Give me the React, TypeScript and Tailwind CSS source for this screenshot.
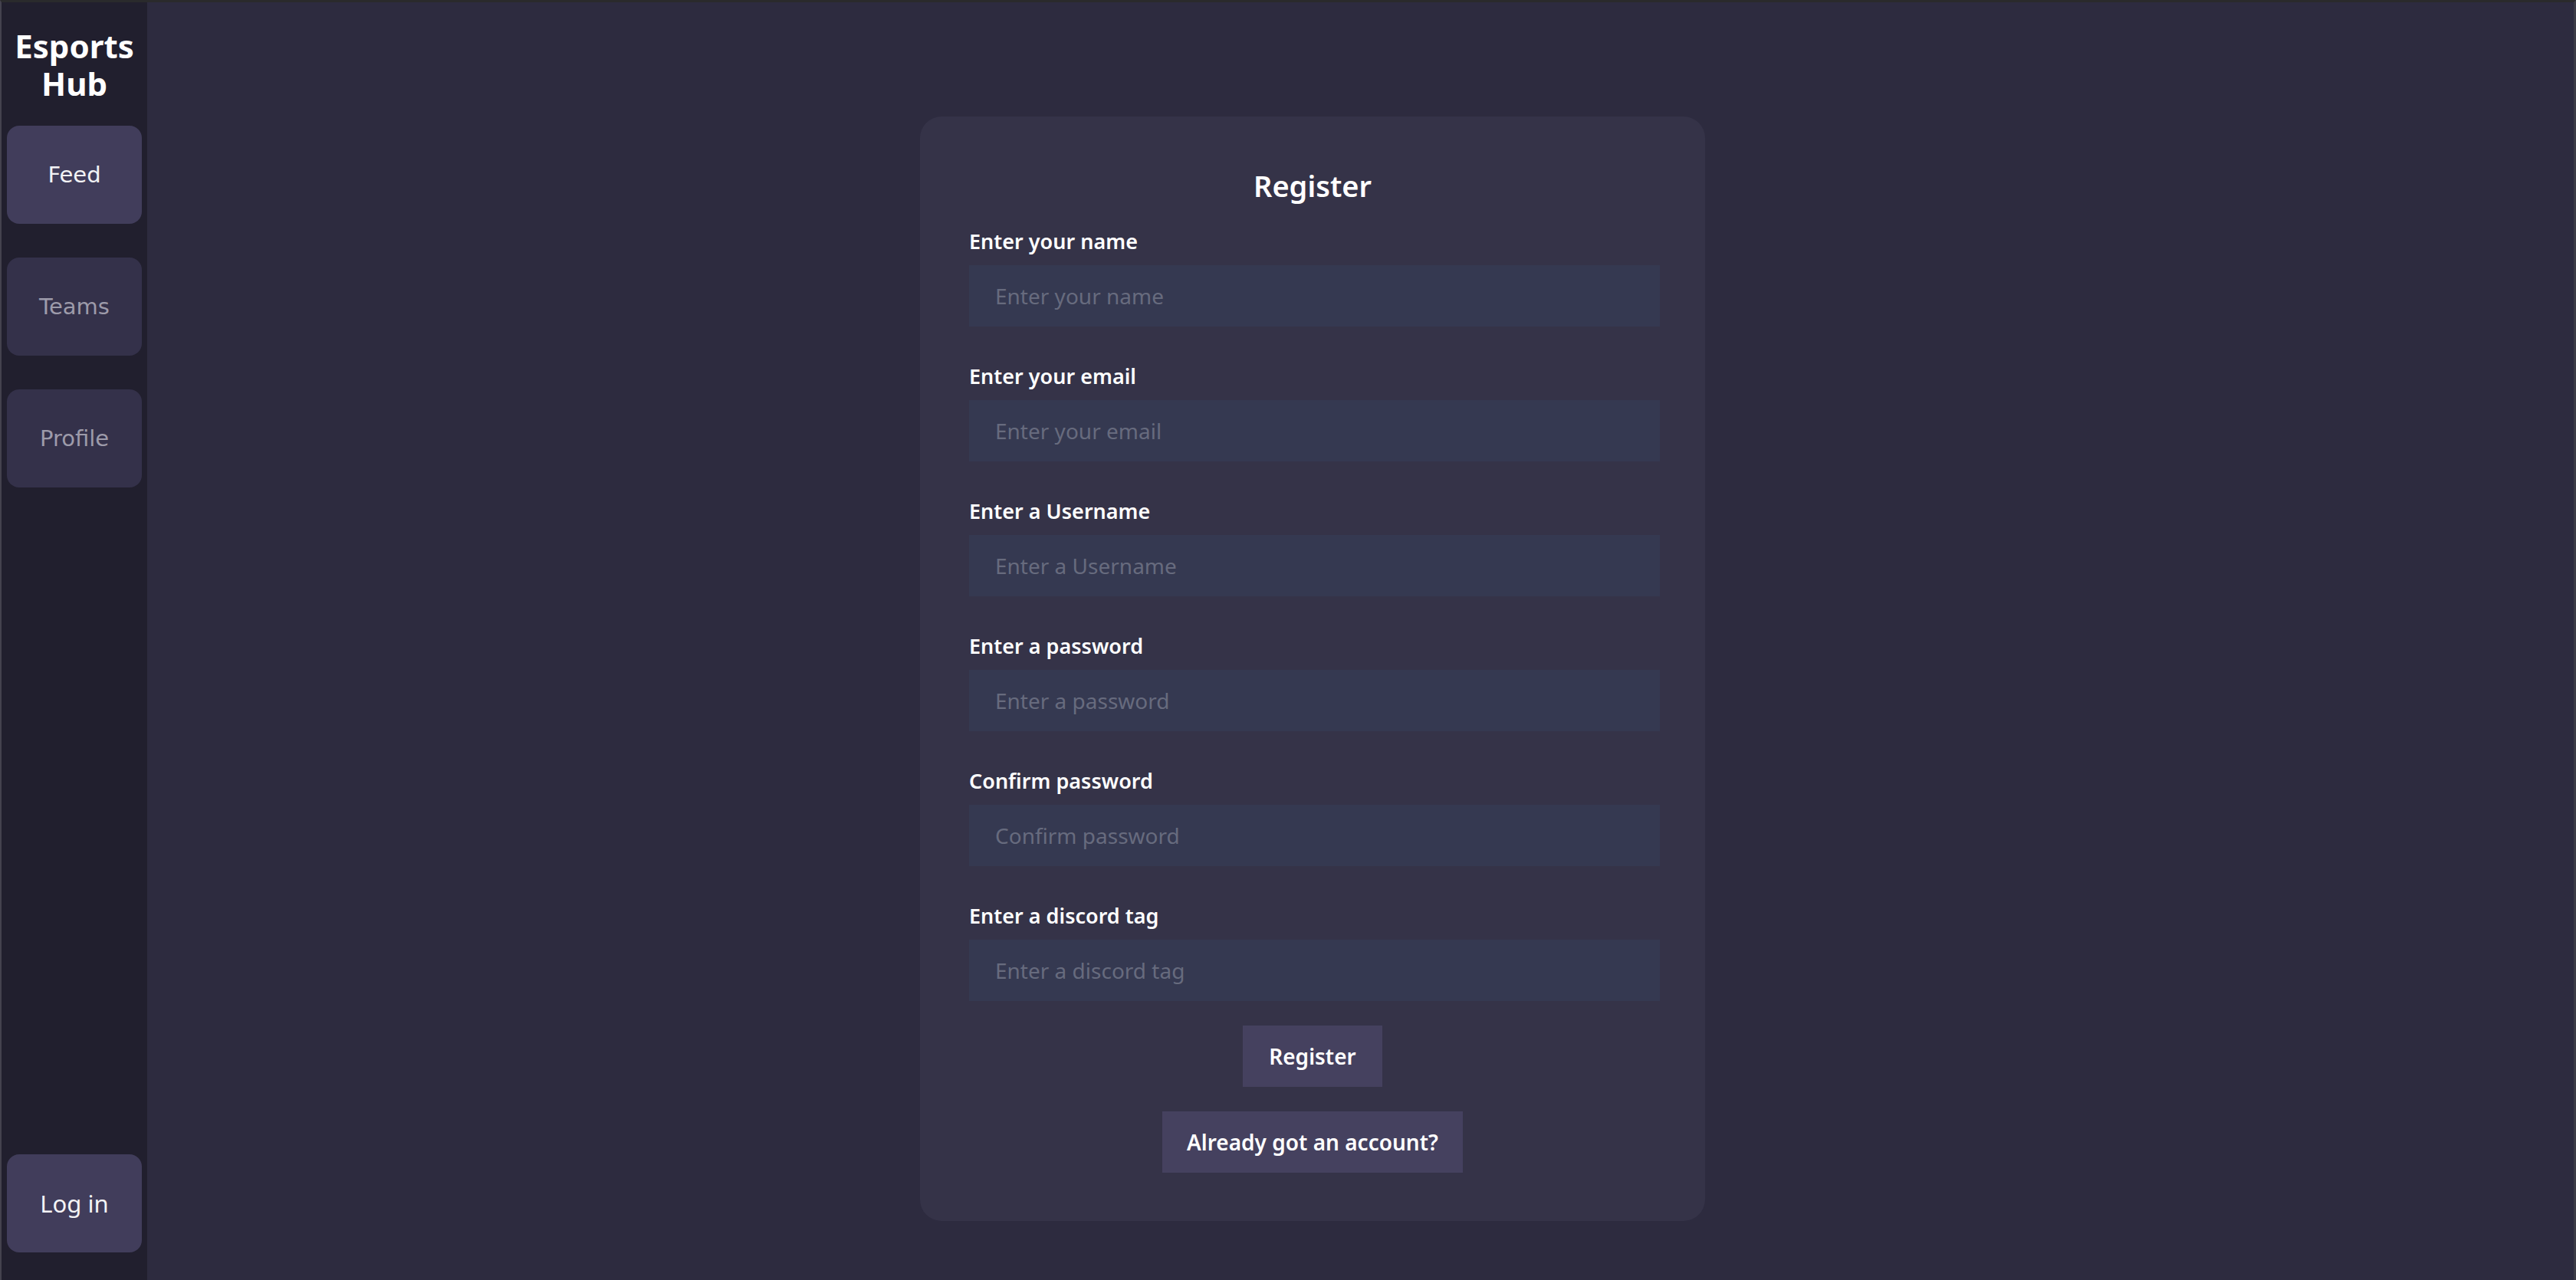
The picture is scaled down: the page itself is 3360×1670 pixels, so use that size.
import React from "react";

const fields = [
  { label: "Enter your name", type: "text" },
  { label: "Enter your email", type: "email" },
  { label: "Enter a Username", type: "text" },
  { label: "Enter a password", type: "password" },
  { label: "Confirm password", type: "password" },
  { label: "Enter a discord tag", type: "text" },
];

function NavButton({ label, active }: { label: string; active?: boolean }) {
  return (
    <button
      className={
        "w-[176px] h-[128px] rounded-2xl flex items-center justify-center pt-[2px] text-[29px] font-['DejaVu_Sans',sans-serif] " +
        (active ? "bg-[#413d5b] text-[#f2f2f5]" : "bg-[#34314a] text-[#9d9baa]")
      }
    >
      {label}
    </button>
  );
}

export default function App() {
  return (
    <div className="w-[3360px] h-[1670px] flex border-t-[3px] border-t-[#2a2a2c] border-l-2 border-l-[#44424e] border-r-[3px] border-r-[#3c3b46] overflow-hidden font-['Noto_Sans',sans-serif]">
      <aside className="w-[190px] h-full bg-[#211f2e] flex flex-col items-center pt-[32px] pb-[36px]">
        <h1 className="text-[42px] leading-[49px] font-bold text-white text-center">
          <span className="block">Esports</span>
          <span className="block">Hub</span>
        </h1>
        <nav className="mt-[31px] flex flex-col gap-[44px]">
          <NavButton label="Feed" active />
          <NavButton label="Teams" />
          <NavButton label="Profile" />
        </nav>
        <div className="flex-1" />
        <button className="w-[176px] h-[128px] rounded-2xl bg-[#413d5b] text-[#f4f4f6] text-[31px] flex items-center justify-center">
          Log in
        </button>
      </aside>
      <main className="flex-1 h-full bg-[#2d2b3f] pt-[149px] pl-[1008px]">
        <div className="w-[1024px] bg-[#353348] rounded-[28px] pt-[64px] px-[64px] pb-[63px] flex flex-col">
          <h2 className="text-[38px] leading-[52px] font-semibold text-white text-center mb-[27px]">
            Register
          </h2>
          <div className="flex flex-col gap-[45px]">
            {fields.map((f) => (
              <div key={f.label} className="flex flex-col">
                <label className="text-[27px] leading-[40px] font-semibold text-white mb-[11px]">
                  {f.label}
                </label>
                <input
                  type={f.type}
                  placeholder={f.label}
                  className="w-[901px] h-[80px] bg-[#353951] px-[34px] text-[28px] text-white placeholder:text-[#676b7e] outline-none"
                />
              </div>
            ))}
          </div>
          <div className="flex flex-col items-center gap-[32px] mt-[32px]">
            <button className="h-[80px] px-[34px] bg-[#45415f] text-white text-[28px] font-semibold">
              Register
            </button>
            <button className="h-[80px] px-[32px] bg-[#45415f] text-white text-[28px] font-semibold">
              Already got an account?
            </button>
          </div>
        </div>
      </main>
    </div>
  );
}
